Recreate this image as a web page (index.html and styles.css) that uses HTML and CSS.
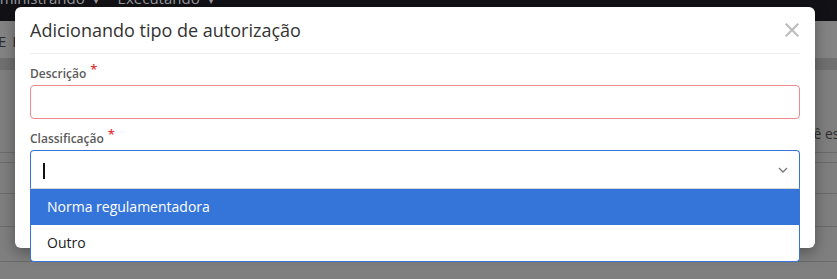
FILE: index.html
```html
<!DOCTYPE html>
<html lang="pt-BR">
<head>
<meta charset="utf-8">
<title>Adicionando tipo de autorização</title>
<link rel="stylesheet" href="styles.css">
</head>
<body>
<header class="topbar">
  <nav class="nav">
    <span class="nav-item">Administrando <span class="nav-caret">▾</span></span>
    <span class="nav-item">Executando <span class="nav-caret">▾</span></span>
  </nav>
</header>
<main class="page">
  <div class="page-head"><span class="page-title">E E</span></div>
  <div class="page-band"></div>
  <div class="page-info"><span class="info-text">Você está vendo</span></div>
  <div class="row row-thin"></div>
  <div class="row row-a"></div>
  <div class="row row-b"></div>
  <div class="row row-c"></div>
</main>

<div class="modal">
  <div class="modal-header">
    <h4 class="modal-title">Adicionando tipo de autorização</h4>
    <button class="close" type="button" aria-label="Fechar">
      <svg width="14" height="14" viewBox="0 0 14 14"><path d="M1.5 1.5 L12.5 12.5 M12.5 1.5 L1.5 12.5" stroke="#bdbdbd" stroke-width="2.2" stroke-linecap="square" fill="none"/></svg>
    </button>
  </div>
  <div class="modal-body">
    <div class="field">
      <label class="label">Descrição<span class="req">*</span></label>
      <div class="input input-error"></div>
    </div>
    <div class="field">
      <label class="label">Classificação<span class="req">*</span></label>
      <div class="select-wrap">
        <div class="select">
          <span class="caret-line"></span>
          <svg class="chevron" width="10" height="6" viewBox="0 0 10 6"><path d="M1 1 L5 5 L9 1" stroke="#777" stroke-width="1.3" fill="none"/></svg>
        </div>
        <ul class="dropdown">
          <li class="option option-active">Norma regulamentadora</li>
          <li class="option">Outro</li>
        </ul>
      </div>
    </div>
  </div>
</div>
</body>
</html>
```

FILE: styles.css
```css
* { box-sizing: border-box; }

html, body {
  margin: 0;
  padding: 0;
}

body {
  width: 837px;
  height: 279px;
  overflow: hidden;
  background: #7f7f7f;
  font-family: "Open Sans", "Noto Sans", "DejaVu Sans", sans-serif;
  position: relative;
}

.topbar {
  height: 21px;
  background: #111116;
  overflow: hidden;
}

.nav {
  display: flex;
  gap: 19px;
  margin-top: -12px;
  margin-left: -19px;
  font-size: 15px;
  line-height: 20px;
  color: #9a9a9e;
  white-space: nowrap;
}

.nav-caret {
  font-size: 10px;
  margin-left: 5px;
}

.page {
  display: flex;
  flex-direction: column;
}

.page-head {
  height: 37px;
  background: #848484;
  display: flex;
  align-items: center;
  padding-top: 2px;
}

.page-title {
  font-size: 15px;
  color: #2e2e2e;
  margin-left: -2px;
  letter-spacing: 1px;
}

.page-band {
  height: 12px;
  background: #707070;
}

.page-info {
  height: 83px;
  display: flex;
  align-items: flex-end;
  padding-bottom: 9px;
  padding-left: 790px;
  white-space: nowrap;
  border-bottom: 1px solid #6c6c6c;
}

.info-text {
  font-size: 14px;
  color: #2e2e2e;
}

.row {
  border-bottom: 1px solid #6c6c6c;
}

.row-thin { height: 10px; }
.row-a { height: 31px; }
.row-b { height: 33px; }
.row-c { height: 35px; }

.modal {
  position: absolute;
  top: 7px;
  left: 15px;
  width: 800px;
  height: 241px;
  background: #fff;
  border-radius: 6px;
  box-shadow: 0 5px 15px rgba(0, 0, 0, 0.35);
}

.modal-header {
  margin: 0 15px;
  padding: 11px 0;
  border-bottom: 1px solid #eeeeee;
  display: flex;
  align-items: center;
  justify-content: space-between;
}

.modal-title {
  margin: 0;
  font-size: 18px;
  line-height: 24px;
  font-weight: 400;
  color: #333;
}

.close {
  border: 0;
  background: none;
  padding: 0;
  margin-right: 1px;
  width: 14px;
  height: 14px;
  display: flex;
}

.modal-body {
  padding: 11px 15px 0;
}

.field {
  margin-bottom: 11px;
}

.label {
  display: block;
  font-size: 12px;
  line-height: 18px;
  font-weight: 600;
  color: #5a5a5a;
  margin-bottom: 2px;
}

.req {
  color: #e0383b;
  font-size: 13px;
  margin-left: 4px;
  vertical-align: 4px;
  line-height: 0;
}

.input {
  height: 34px;
  border: 1px solid #ccc;
  border-radius: 4px;
  background: #fff;
}

.input-error {
  border-color: #ec8b8d;
}

.select-wrap {
  position: relative;
}

.select {
  height: 39px;
  border: 1px solid #3575d9;
  border-bottom-color: #d6d6d6;
  border-radius: 4px 4px 0 0;
  display: flex;
  align-items: center;
  justify-content: space-between;
  padding: 0 11px 0 12px;
}

.caret-line {
  width: 1.5px;
  height: 16px;
  background: #111;
  margin-top: 2px;
}

.chevron {
  margin-top: 1px;
}

.dropdown {
  position: absolute;
  top: 100%;
  left: 0;
  right: 0;
  margin: 0;
  padding: 0;
  list-style: none;
  background: #fff;
  border: 1px solid #3575d9;
  border-top: 0;
  border-radius: 0 0 4px 4px;
  overflow: hidden;
}

.option {
  height: 36px;
  line-height: 36px;
  padding-left: 16px;
  font-size: 14px;
  color: #222;
}

.option-active {
  background: #3575d9;
  color: #fff;
}
```
